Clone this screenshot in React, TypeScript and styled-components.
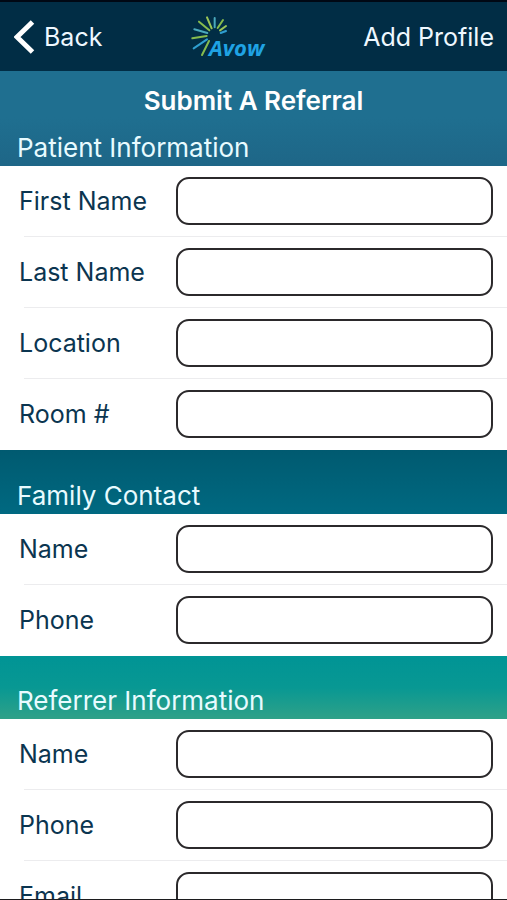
import React from "react";
import styled, { createGlobalStyle } from "styled-components";

const GlobalStyle = createGlobalStyle`
  *, *::before, *::after { box-sizing: border-box; }
  body {
    margin: 0;
    background: #ffffff;
    font-family: Inter, Roboto, sans-serif;
    font-size: 26px;
    line-height: 32px;
    color: #0b3550;
  }
`;

const Screen = styled.div`
  display: flex;
  flex-direction: column;
  height: 100vh;
  border-top: 2px solid #000814;
  border-bottom: 1px solid #1c1c1e;
`;

const NavBar = styled.header`
  flex: none;
  display: flex;
  justify-content: space-between;
  align-items: center;
  min-height: 69px;
  padding: 0 13px 0 14px;
  background: #012d45;
`;

const NavButton = styled.button`
  display: flex;
  align-items: center;
  gap: 9px;
  padding: 0;
  border: 0;
  background: none;
  color: #eef8ff;
  font: inherit;
  font-size: 25px;
  white-space: nowrap;
  cursor: pointer;
`;

const Logo = styled.svg`
  flex: none;
  width: 80px;
  height: 46px;
  margin: 2px 4px 0 0;
`;

const Form = styled.form`
  flex: 1;
  min-height: 0;
  overflow-y: auto;
  scrollbar-width: none;
`;

const Title = styled.h1`
  margin: 0;
  padding-top: 14px;
  background: #1f6f90;
  color: #ffffff;
  font-size: 26px;
  font-weight: 600;
  line-height: 32px;
  text-align: center;
`;

const Section = styled.section`
  background: #ffffff;
`;

const SectionHeading = styled.h2<{ $gradient: string; $height: number }>`
  display: flex;
  align-items: flex-end;
  min-height: ${({ $height }) => $height}px;
  margin: 0;
  padding: 0 17px 2px;
  background: linear-gradient(${({ $gradient }) => $gradient});
  color: #e8fbff;
  font-size: 26px;
  font-weight: 400;
`;

const Row = styled.div`
  display: grid;
  grid-template-columns: 157px 1fr;
  align-items: center;
  min-height: 71px;
  padding: 0 14px 2px 19px;
  background: linear-gradient(#ececee, #ececee) 24px 100% / 100% 1px no-repeat;

  &:last-child {
    background: none;
  }
`;

const Label = styled.label`
  font-size: 25px;
`;

const Field = styled.input`
  width: 100%;
  height: 48px;
  padding: 0 12px;
  border: 2px solid #2b292b;
  border-radius: 13px;
  background: #ffffff;
  color: inherit;
  font: inherit;
`;

const rays = [
  { d: "M63 150 84 108", c: "#86bb4e" },
  { d: "M38 130 78 103", c: "#2f9fd0" },
  { d: "M34 100 77 93", c: "#86bb4e" },
  { d: "M40 73 79 84", c: "#4aa9bd" },
  { d: "M54 50 85 76", c: "#86bb4e" },
  { d: "M78 37 92 70", c: "#9ac458" },
  { d: "M101 39 101 67", c: "#4aa9bd" },
  { d: "M126 45 110 69", c: "#86bb4e" },
  { d: "M135 63 117 76", c: "#9ac458" },
  { d: "M135 78 119 84", c: "#2f9fd0" },
];

function AvowLogo() {
  return (
    <Logo viewBox="30 30 240 138" role="img" aria-label="Avow">
      {rays.map((ray) => (
        <path key={ray.d} d={ray.d} stroke={ray.c} strokeWidth="6" strokeLinecap="round" />
      ))}
      <text
        x="84"
        y="152"
        fill="#1fa3e4"
        fontFamily="'Open Sans', 'Noto Sans', sans-serif"
        fontSize="66"
        fontStyle="italic"
        fontWeight="700"
      >
        Avow
      </text>
    </Logo>
  );
}

function BackChevron() {
  return (
    <svg width="21" height="34" viewBox="0 0 21 34" fill="none" aria-hidden="true">
      <path d="M18.500 2 3 17l15.500 15" stroke="#ffffff" strokeWidth="5" />
    </svg>
  );
}

const sections = [
  {
    id: "patient",
    title: "Patient Information",
    gradient: "#1f6f90, #1e6687",
    height: 49,
    fields: ["First Name", "Last Name", "Location", "Room #"],
  },
  {
    id: "family",
    title: "Family Contact",
    gradient: "#005a70, #006981",
    height: 64,
    fields: ["Name", "Phone"],
  },
  {
    id: "referrer",
    title: "Referrer Information",
    gradient: "#009495, #089893 50%, #2fa188",
    height: 63,
    fields: ["Name", "Phone", "Email"],
  },
];

export default function App() {
  return (
    <>
      <GlobalStyle />
      <Screen>
        <NavBar>
          <NavButton type="button">
            <BackChevron />
            Back
          </NavButton>
          <AvowLogo />
          <NavButton type="button">Add Profile</NavButton>
        </NavBar>
        <Form>
          <Title>Submit A Referral</Title>
          {sections.map((section) => (
            <Section key={section.id} aria-labelledby={`${section.id}-title`}>
              <SectionHeading
                id={`${section.id}-title`}
                $gradient={section.gradient}
                $height={section.height}
              >
                {section.title}
              </SectionHeading>
              {section.fields.map((name) => {
                const id = `${section.id}-${name.toLowerCase().replace(/[^a-z]+/g, "-")}`;
                return (
                  <Row key={id}>
                    <Label htmlFor={id}>{name}</Label>
                    <Field id={id} name={id} type="text" />
                  </Row>
                );
              })}
            </Section>
          ))}
        </Form>
      </Screen>
    </>
  );
}
